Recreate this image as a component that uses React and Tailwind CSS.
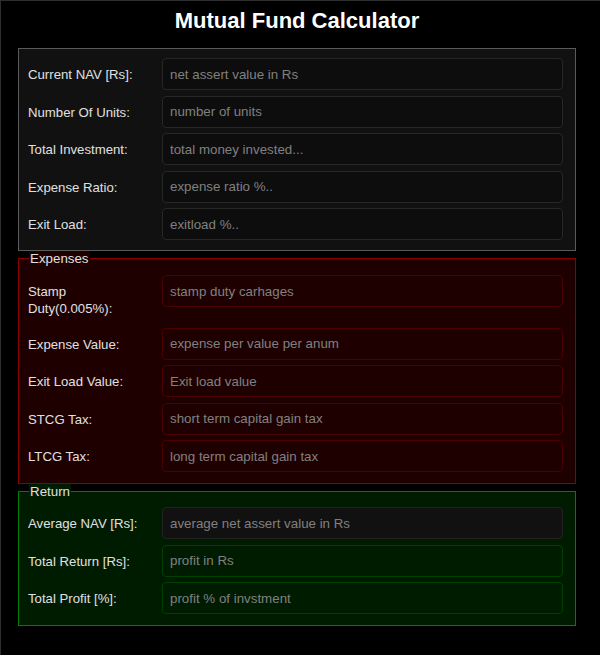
import React from 'react';

const general = [
  { label: 'Current NAV [Rs]:', placeholder: 'net assert value in Rs' },
  { label: 'Number Of Units:', placeholder: 'number of units' },
  { label: 'Total Investment:', placeholder: 'total money invested...' },
  { label: 'Expense Ratio:', placeholder: 'expense ratio %..' },
  { label: 'Exit Load:', placeholder: 'exitload %..' },
];

const expenses = [
  { label: 'Stamp Duty(0.005%):', placeholder: 'stamp duty carhages' },
  { label: 'Expense Value:', placeholder: 'expense per value per anum' },
  { label: 'Exit Load Value:', placeholder: 'Exit load value' },
  { label: 'STCG Tax:', placeholder: 'short term capital gain tax' },
  { label: 'LTCG Tax:', placeholder: 'long term capital gain tax' },
];

const returns = [
  { label: 'Average NAV [Rs]:', placeholder: 'average net assert value in Rs', dark: true },
  { label: 'Total Return [Rs]:', placeholder: 'profit in Rs' },
  { label: 'Total Profit [%]:', placeholder: 'profit % of invstment' },
];

const Row = ({ label, placeholder, inputClass }) => (
  <div className="flex items-start">
    <label className="w-[134px] shrink-0 pt-2 pb-[5px] pr-4 text-[13.2px] leading-[17px] text-[#e0e0e0]">
      {label}
    </label>
    <input
      type="text"
      placeholder={placeholder}
      className={`h-8 w-[401px] rounded-[4px] border px-[7px] text-[13.33px] text-[#ddd] outline-none placeholder:text-[#808080] ${inputClass}`}
    />
  </div>
);

export default function App() {
  return (
    <div className="min-h-[655px] border-t border-l border-[#2e2e2e] bg-black font-['Liberation_Sans',Arial,sans-serif]">
      <div className="ml-[17px] w-[558px] pb-[29px]">
        <h1 className="mb-[15px] pt-[7px] text-center text-[22px] font-bold leading-[25px] text-white">
          Mutual Fund Calculator
        </h1>

        <fieldset className="border border-[#5a5a5a] bg-[#111] pl-[9px] pr-[11px] pt-[9px] pb-[10px]">
          <div className="flex flex-col gap-[5.5px]">
            {general.map((r) => (
              <Row key={r.label} {...r} inputClass="border-[#272727] bg-[#0d0d0d]" />
            ))}
          </div>
        </fieldset>

        <fieldset className="border border-[#8b0000] bg-[#1f0000] pl-[9px] pr-[11px] pt-[9px] pb-[11px]">
          <legend className="ml-[1px] bg-[#1f0000] px-[1px] text-[13.33px] leading-[15px] text-[#e0e0e0]">Expenses</legend>
          <div className="flex flex-col gap-[5.5px]">
            {expenses.map((r) => (
              <Row key={r.label} {...r} inputClass="border-[#4a0000] bg-[#1f0000]" />
            ))}
          </div>
        </fieldset>

        <fieldset className="border border-[#008000] bg-[#001c00] pl-[9px] pr-[11px] pt-[8px] pb-[11px]">
          <legend className="ml-[1px] bg-[#001c00] px-[1px] text-[13.33px] leading-[15px] text-[#e0e0e0]">Return</legend>
          <div className="flex flex-col gap-[5.5px]">
            {returns.map((r) => (
              <Row
                key={r.label}
                {...r}
                inputClass={r.dark ? 'border-[#222] bg-[#111]' : 'border-[#004000] bg-[#001c00]'}
              />
            ))}
          </div>
        </fieldset>
      </div>
    </div>
  );
}
